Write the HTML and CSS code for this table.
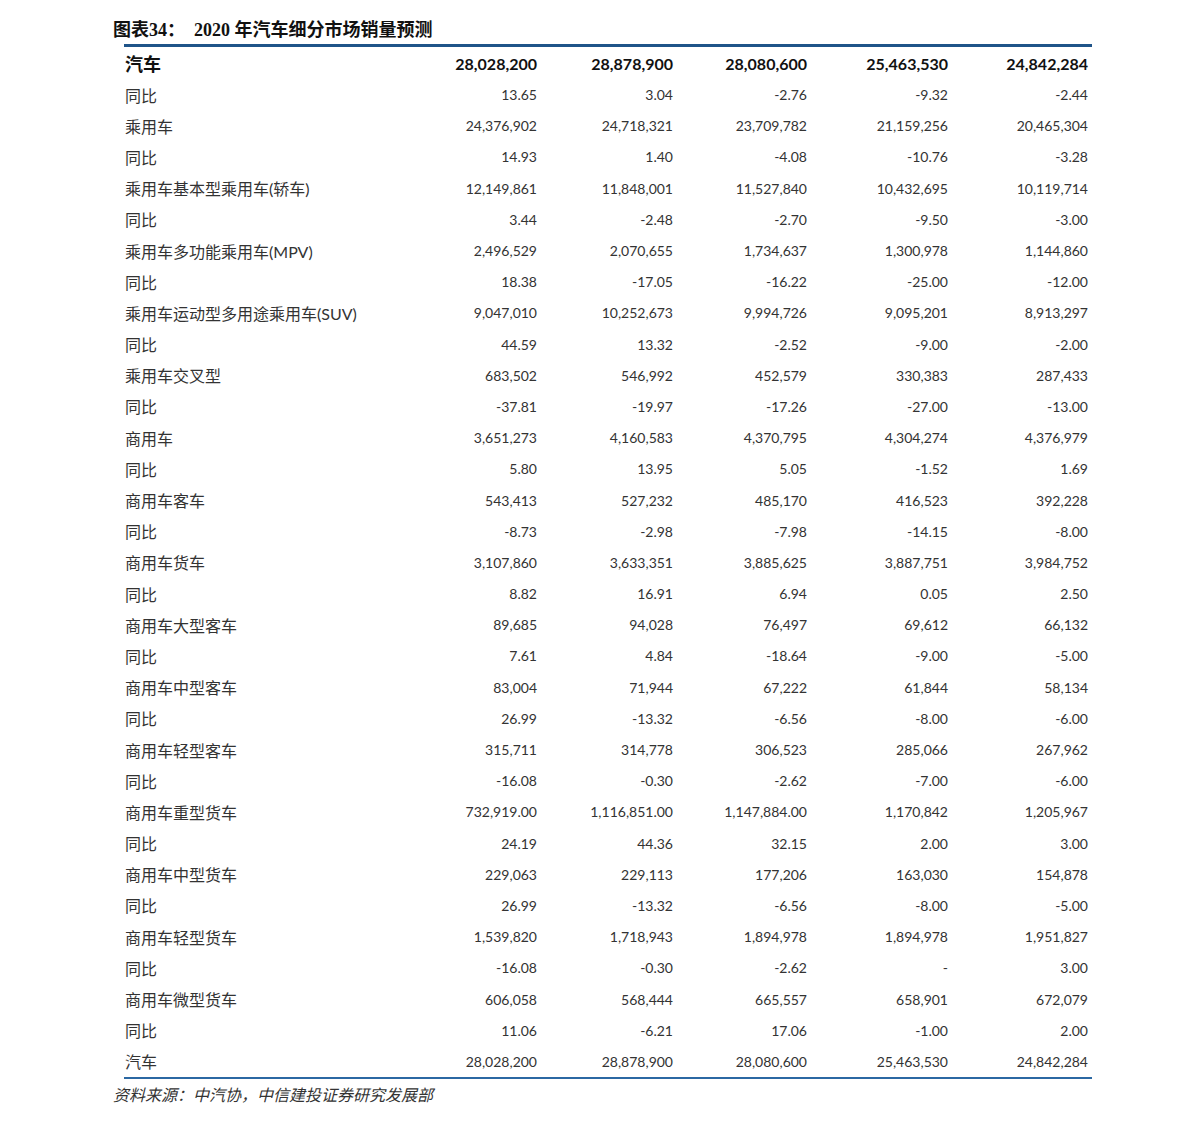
FILE: index.html
```html
<!DOCTYPE html>
<html lang="zh-CN">
<head>
<meta charset="utf-8">
<title>2020年汽车细分市场销量预测</title>
<link rel="stylesheet" href="styles.css">
</head>
<body>
<div class="page">
  <h1 class="title"><span class="t-label">图表34：</span><span class="t-text">2020 年汽车细分市场销量预测</span></h1>
  <table class="data">
    <colgroup><col class="c1"><col class="c2"><col class="c3"><col class="c4"><col class="c5"><col class="c6"></colgroup>
    <tbody>
      <tr class="head"><td class="lbl">汽车</td><td>28,028,200</td><td>28,878,900</td><td>28,080,600</td><td>25,463,530</td><td>24,842,284</td></tr>
      <tr><td class="lbl">同比</td><td>13.65</td><td>3.04</td><td>-2.76</td><td>-9.32</td><td>-2.44</td></tr>
      <tr><td class="lbl">乘用车</td><td>24,376,902</td><td>24,718,321</td><td>23,709,782</td><td>21,159,256</td><td>20,465,304</td></tr>
      <tr><td class="lbl">同比</td><td>14.93</td><td>1.40</td><td>-4.08</td><td>-10.76</td><td>-3.28</td></tr>
      <tr><td class="lbl">乘用车基本型乘用车(轿车)</td><td>12,149,861</td><td>11,848,001</td><td>11,527,840</td><td>10,432,695</td><td>10,119,714</td></tr>
      <tr><td class="lbl">同比</td><td>3.44</td><td>-2.48</td><td>-2.70</td><td>-9.50</td><td>-3.00</td></tr>
      <tr><td class="lbl">乘用车多功能乘用车(MPV)</td><td>2,496,529</td><td>2,070,655</td><td>1,734,637</td><td>1,300,978</td><td>1,144,860</td></tr>
      <tr><td class="lbl">同比</td><td>18.38</td><td>-17.05</td><td>-16.22</td><td>-25.00</td><td>-12.00</td></tr>
      <tr><td class="lbl">乘用车运动型多用途乘用车(SUV)</td><td>9,047,010</td><td>10,252,673</td><td>9,994,726</td><td>9,095,201</td><td>8,913,297</td></tr>
      <tr><td class="lbl">同比</td><td>44.59</td><td>13.32</td><td>-2.52</td><td>-9.00</td><td>-2.00</td></tr>
      <tr><td class="lbl">乘用车交叉型</td><td>683,502</td><td>546,992</td><td>452,579</td><td>330,383</td><td>287,433</td></tr>
      <tr><td class="lbl">同比</td><td>-37.81</td><td>-19.97</td><td>-17.26</td><td>-27.00</td><td>-13.00</td></tr>
      <tr><td class="lbl">商用车</td><td>3,651,273</td><td>4,160,583</td><td>4,370,795</td><td>4,304,274</td><td>4,376,979</td></tr>
      <tr><td class="lbl">同比</td><td>5.80</td><td>13.95</td><td>5.05</td><td>-1.52</td><td>1.69</td></tr>
      <tr><td class="lbl">商用车客车</td><td>543,413</td><td>527,232</td><td>485,170</td><td>416,523</td><td>392,228</td></tr>
      <tr><td class="lbl">同比</td><td>-8.73</td><td>-2.98</td><td>-7.98</td><td>-14.15</td><td>-8.00</td></tr>
      <tr><td class="lbl">商用车货车</td><td>3,107,860</td><td>3,633,351</td><td>3,885,625</td><td>3,887,751</td><td>3,984,752</td></tr>
      <tr><td class="lbl">同比</td><td>8.82</td><td>16.91</td><td>6.94</td><td>0.05</td><td>2.50</td></tr>
      <tr><td class="lbl">商用车大型客车</td><td>89,685</td><td>94,028</td><td>76,497</td><td>69,612</td><td>66,132</td></tr>
      <tr><td class="lbl">同比</td><td>7.61</td><td>4.84</td><td>-18.64</td><td>-9.00</td><td>-5.00</td></tr>
      <tr><td class="lbl">商用车中型客车</td><td>83,004</td><td>71,944</td><td>67,222</td><td>61,844</td><td>58,134</td></tr>
      <tr><td class="lbl">同比</td><td>26.99</td><td>-13.32</td><td>-6.56</td><td>-8.00</td><td>-6.00</td></tr>
      <tr><td class="lbl">商用车轻型客车</td><td>315,711</td><td>314,778</td><td>306,523</td><td>285,066</td><td>267,962</td></tr>
      <tr><td class="lbl">同比</td><td>-16.08</td><td>-0.30</td><td>-2.62</td><td>-7.00</td><td>-6.00</td></tr>
      <tr><td class="lbl">商用车重型货车</td><td>732,919.00</td><td>1,116,851.00</td><td>1,147,884.00</td><td>1,170,842</td><td>1,205,967</td></tr>
      <tr><td class="lbl">同比</td><td>24.19</td><td>44.36</td><td>32.15</td><td>2.00</td><td>3.00</td></tr>
      <tr><td class="lbl">商用车中型货车</td><td>229,063</td><td>229,113</td><td>177,206</td><td>163,030</td><td>154,878</td></tr>
      <tr><td class="lbl">同比</td><td>26.99</td><td>-13.32</td><td>-6.56</td><td>-8.00</td><td>-5.00</td></tr>
      <tr><td class="lbl">商用车轻型货车</td><td>1,539,820</td><td>1,718,943</td><td>1,894,978</td><td>1,894,978</td><td>1,951,827</td></tr>
      <tr><td class="lbl">同比</td><td>-16.08</td><td>-0.30</td><td>-2.62</td><td>-</td><td>3.00</td></tr>
      <tr><td class="lbl">商用车微型货车</td><td>606,058</td><td>568,444</td><td>665,557</td><td>658,901</td><td>672,079</td></tr>
      <tr><td class="lbl">同比</td><td>11.06</td><td>-6.21</td><td>17.06</td><td>-1.00</td><td>2.00</td></tr>
      <tr><td class="lbl">汽车</td><td>28,028,200</td><td>28,878,900</td><td>28,080,600</td><td>25,463,530</td><td>24,842,284</td></tr>
    </tbody>
  </table>
  <p class="source">资料来源：中汽协，中信建投证券研究发展部</p>
</div>
</body>
</html>
```
FILE: styles.css
```css
html, body {
  margin: 0;
  padding: 0;
  background: #ffffff;
}
.page {
  padding-left: 113px;
  color: #333333;
  font-family: Lato, "Noto Sans CJK SC", sans-serif;
}
.title {
  margin: 0;
  padding-top: 18px;
  height: 24px;
  line-height: 24px;
  font-size: 18px;
  font-weight: bold;
  color: #111111;
  font-family: "Liberation Serif", "Noto Sans CJK SC", serif;
  white-space: nowrap;
}
.t-label {
  margin-right: 9px;
}
.data {
  margin-top: 2px;
  margin-left: 11px;
  width: 968px;
  table-layout: fixed;
  border-collapse: separate;
  border-spacing: 0;
  border-top: 3px solid #1f5489;
  border-bottom: 2px solid #2b68a3;
}
.c1 { width: 276px; }
.c2 { width: 140px; }
.c3 { width: 136px; }
.c4 { width: 134px; }
.c5 { width: 141px; }
.c6 { width: 141px; }
.data td {
  padding: 0 3px 0 0;
  height: 31.2px;
  text-align: right;
  vertical-align: middle;
  font-size: 14px;
  white-space: nowrap;
  color: #333333;
}
.data td:last-child {
  padding-right: 4px;
}
.data td.lbl {
  text-align: left;
  padding: 0 0 0 1px;
  font-size: 16px;
}
.data tr.head td {
  height: 32px;
  font-weight: bold;
  font-size: 16px;
  color: #111111;
}
.data tr.head td.lbl {
  font-size: 18px;
}
.source {
  margin: 0;
  height: 30px;
  line-height: 30px;
  font-size: 16px;
  font-style: italic;
  color: #333333;
  font-family: "Noto Sans CJK SC", sans-serif;
  white-space: nowrap;
}
```
